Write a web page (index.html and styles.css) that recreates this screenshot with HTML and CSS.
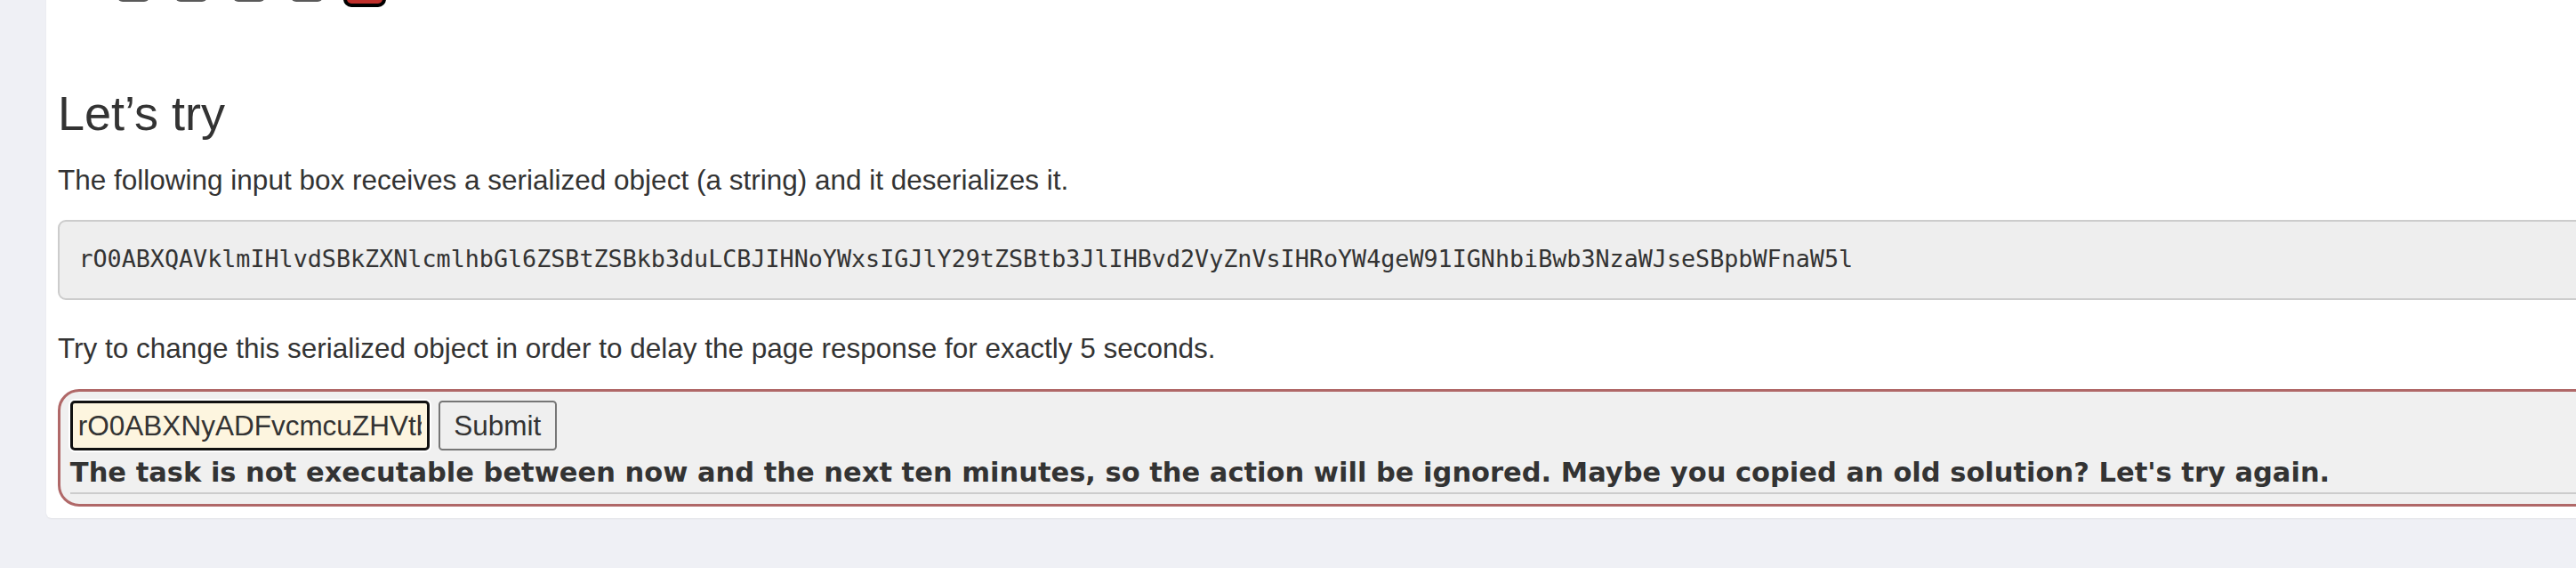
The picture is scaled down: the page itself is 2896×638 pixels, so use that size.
FILE: index.html
```html
<!DOCTYPE html>
<html lang="en">
<head>
<meta charset="utf-8">
<title>Let’s try</title>
<link rel="stylesheet" href="styles.css">
</head>
<body>
<main class="page">
  <section class="card">
    <nav class="pager">
      <span class="page-dot"></span>
      <span class="page-dot"></span>
      <span class="page-dot"></span>
      <span class="page-dot"></span>
      <span class="page-dot current"></span>
    </nav>
    <h3 class="title">Let’s try</h3>
    <p class="text">The following input box receives a serialized object (a string) and it deserializes it.</p>
    <pre class="code">rO0ABXQAVklmIHlvdSBkZXNlcmlhbGl6ZSBtZSBkb3duLCBJIHNoYWxsIGJlY29tZSBtb3JlIHBvd2VyZnVsIHRoYW4geW91IGNhbiBwb3NzaWJseSBpbWFnaW5l</pre>
    <p class="text after-code">Try to change this serialized object in order to delay the page response for exactly 5 seconds.</p>
    <div class="attack failure">
      <form class="attack-form">
        <input class="token" type="text" value="rO0ABXNyADFvcmcuZHVtbXkuaW5zZWN1cmUuZnJhbWV3b3JrLlZ1bG5lcmFibGVUYXNrSG9sZGVy">
        <button class="submit" type="button">Submit</button>
      </form>
      <div class="feedback">The task is not executable between now and the next ten minutes, so the action will be ignored. Maybe you copied an old solution? Let's try again.</div>
    </div>
  </section>
</main>
</body>
</html>
```

FILE: styles.css
```css
html, body {
  margin: 0;
  padding: 0;
  overflow: hidden;
}

body {
  width: 2896px;
  height: 638px;
  background: #eff0f5;
  font-family: "Liberation Sans", Arial, sans-serif;
  font-size: 31.5px;
  line-height: 45px;
  color: #333;
}

.page {
  padding-left: 52px;
}

.card {
  box-sizing: border-box;
  width: 3100px;
  margin-top: -40px;
  padding: 0 13px 13.5px;
  background: #fff;
  border-radius: 0 0 6px 6px;
  box-shadow: 0 1px 2px rgba(0, 0, 0, 0.06);
}

.pager {
  display: flex;
  align-items: center;
  gap: 29px;
  height: 48px;
  padding-left: 67px;
}

.page-dot {
  width: 36px;
  height: 36px;
  border-radius: 6px;
  background: #5a5a5a;
}

.page-dot.current {
  box-sizing: border-box;
  width: 48px;
  height: 48px;
  margin: 0 -6px;
  border: 4px solid #000;
  border-radius: 9px;
  background: #c0302c;
}

.title {
  margin: 89.6px 0 22.5px;
  font-size: 54px;
  line-height: 59.4px;
  font-weight: 500;
  color: #333;
}

.text {
  margin: 0 0 22.5px;
}

.code {
  margin: 0 0 32.5px;
  padding: 21.4px;
  border: 2.25px solid #ccc;
  border-radius: 9px;
  background: #eeeeee;
  font-family: "DejaVu Sans Mono", "Liberation Mono", monospace;
  font-size: 26.72px;
  line-height: 42.75px;
  color: #333;
  white-space: pre;
  overflow: hidden;
}

.attack {
  padding: 10.85px;
  border: 3.8px solid #b06868;
  border-radius: 24px;
  background: #f0f0f0;
}

.attack-form {
  display: flex;
  gap: 10px;
  margin: 0;
}

.token {
  box-sizing: border-box;
  width: 404px;
  height: 56px;
  margin: 0;
  padding: 0 6px;
  border: 3px solid #111;
  border-radius: 5px;
  background: #fdf5df;
  box-shadow: 0 0 0 2px #fff;
  outline: none;
  font-family: "Liberation Sans", Arial, sans-serif;
  font-size: 31.5px;
  color: #333;
}

.submit {
  box-sizing: border-box;
  width: 133px;
  height: 56px;
  margin: 0;
  padding: 0;
  border: 2.25px solid #767676;
  border-radius: 4.5px;
  background: #efefef;
  font-family: "Liberation Sans", Arial, sans-serif;
  font-size: 31.5px;
  color: #333;
}

.feedback {
  margin-top: 1.6px;
  border-bottom: 2.25px solid #ccc;
  font-family: "DejaVu Sans", "Liberation Sans", sans-serif;
  font-size: 30.5px;
  font-weight: bold;
  line-height: 45px;
}
```
